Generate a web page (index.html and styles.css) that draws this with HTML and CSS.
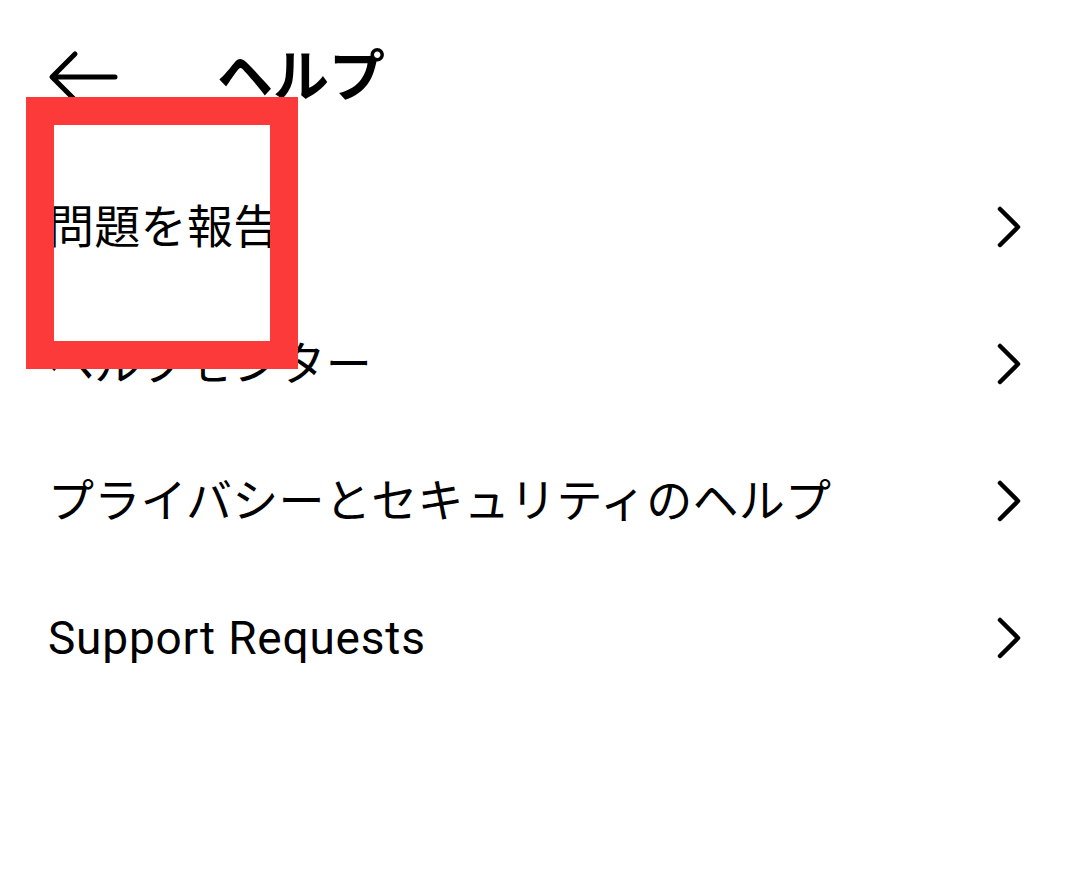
FILE: index.html
```html
<!DOCTYPE html>
<html lang="ja">
    <head>
        <meta charset="UTF-8">
        <meta name="viewport" content="width=device-width, initial-scale=1.0">
        <title>ヘルプ</title>
        <link rel="stylesheet" href="styles.css">
    </head>
    <body>
        <header class="header">
            <button class="header__back" aria-label="戻る">
                <svg class="header__back_icon" viewBox="0 0 72 56" width="72" height="56">
                    <path d="M68 28 H6 M28 5 L5 28 L28 51" fill="none" stroke="#000"
                        stroke-width="5" stroke-linecap="round" stroke-linejoin="round"/>
                </svg>
            </button>
            <h1 class="header__title">ヘルプ</h1>
        </header>
        <main class="menu">
            <a class="menu__item" href="#">
                <span class="menu__label">問題を報告</span>
                <svg class="menu__chevron" viewBox="0 0 26 42" width="26" height="42">
                    <path d="M4 3 L22 21 L4 39" fill="none" stroke="#000"
                        stroke-width="4.5" stroke-linecap="round" stroke-linejoin="round"/>
                </svg>
            </a>
            <a class="menu__item" href="#">
                <span class="menu__label">ヘルプセンター</span>
                <svg class="menu__chevron" viewBox="0 0 26 42" width="26" height="42">
                    <path d="M4 3 L22 21 L4 39" fill="none" stroke="#000"
                        stroke-width="4.5" stroke-linecap="round" stroke-linejoin="round"/>
                </svg>
            </a>
            <a class="menu__item" href="#">
                <span class="menu__label">プライバシーとセキュリティのヘルプ</span>
                <svg class="menu__chevron" viewBox="0 0 26 42" width="26" height="42">
                    <path d="M4 3 L22 21 L4 39" fill="none" stroke="#000"
                        stroke-width="4.5" stroke-linecap="round" stroke-linejoin="round"/>
                </svg>
            </a>
            <a class="menu__item" href="#">
                <span class="menu__label menu__label--latin">Support Requests</span>
                <svg class="menu__chevron" viewBox="0 0 26 42" width="26" height="42">
                    <path d="M4 3 L22 21 L4 39" fill="none" stroke="#000"
                        stroke-width="4.5" stroke-linecap="round" stroke-linejoin="round"/>
                </svg>
            </a>
        </main>
        <div class="highlight" aria-hidden="true"></div>
    </body>
</html>
```

FILE: styles.css
```css
:root {
    --color-background: #fff;
    --color-foreground: #000;
    --color-highlight: #fd3a3a;
}

html,
body {
    margin: 0;
    padding: 0;
    background-color: var(--color-background);
    color: var(--color-foreground);
    font-family: Roboto, "Noto Sans CJK JP", sans-serif;
}

body {
    position: relative;
    min-height: 876px;
}

.header {
    display: flex;
    align-items: center;
    height: 154px;
    padding-bottom: 4px;
    padding-left: 47px;
    gap: 98px;
}

.header__back {
    display: flex;
    border: none;
    background: none;
    padding: 0;
}

.header__title {
    margin: 0;
    font-size: 56px;
    font-weight: 700;
    line-height: 1;
}

.menu {
    display: flex;
    flex-direction: column;
}

.menu__item {
    display: flex;
    align-items: center;
    justify-content: space-between;
    height: 137px;
    padding-left: 48px;
    padding-right: 58px;
    color: inherit;
    text-decoration: none;
}

.menu__label {
    font-size: 46px;
    line-height: 1;
    letter-spacing: 0.3px;
}

.menu__label--latin {
    letter-spacing: 0.8px;
}

.highlight {
    position: absolute;
    left: 26px;
    top: 97px;
    width: 216px;
    height: 216px;
    border: 28px solid var(--color-highlight);
}
```
